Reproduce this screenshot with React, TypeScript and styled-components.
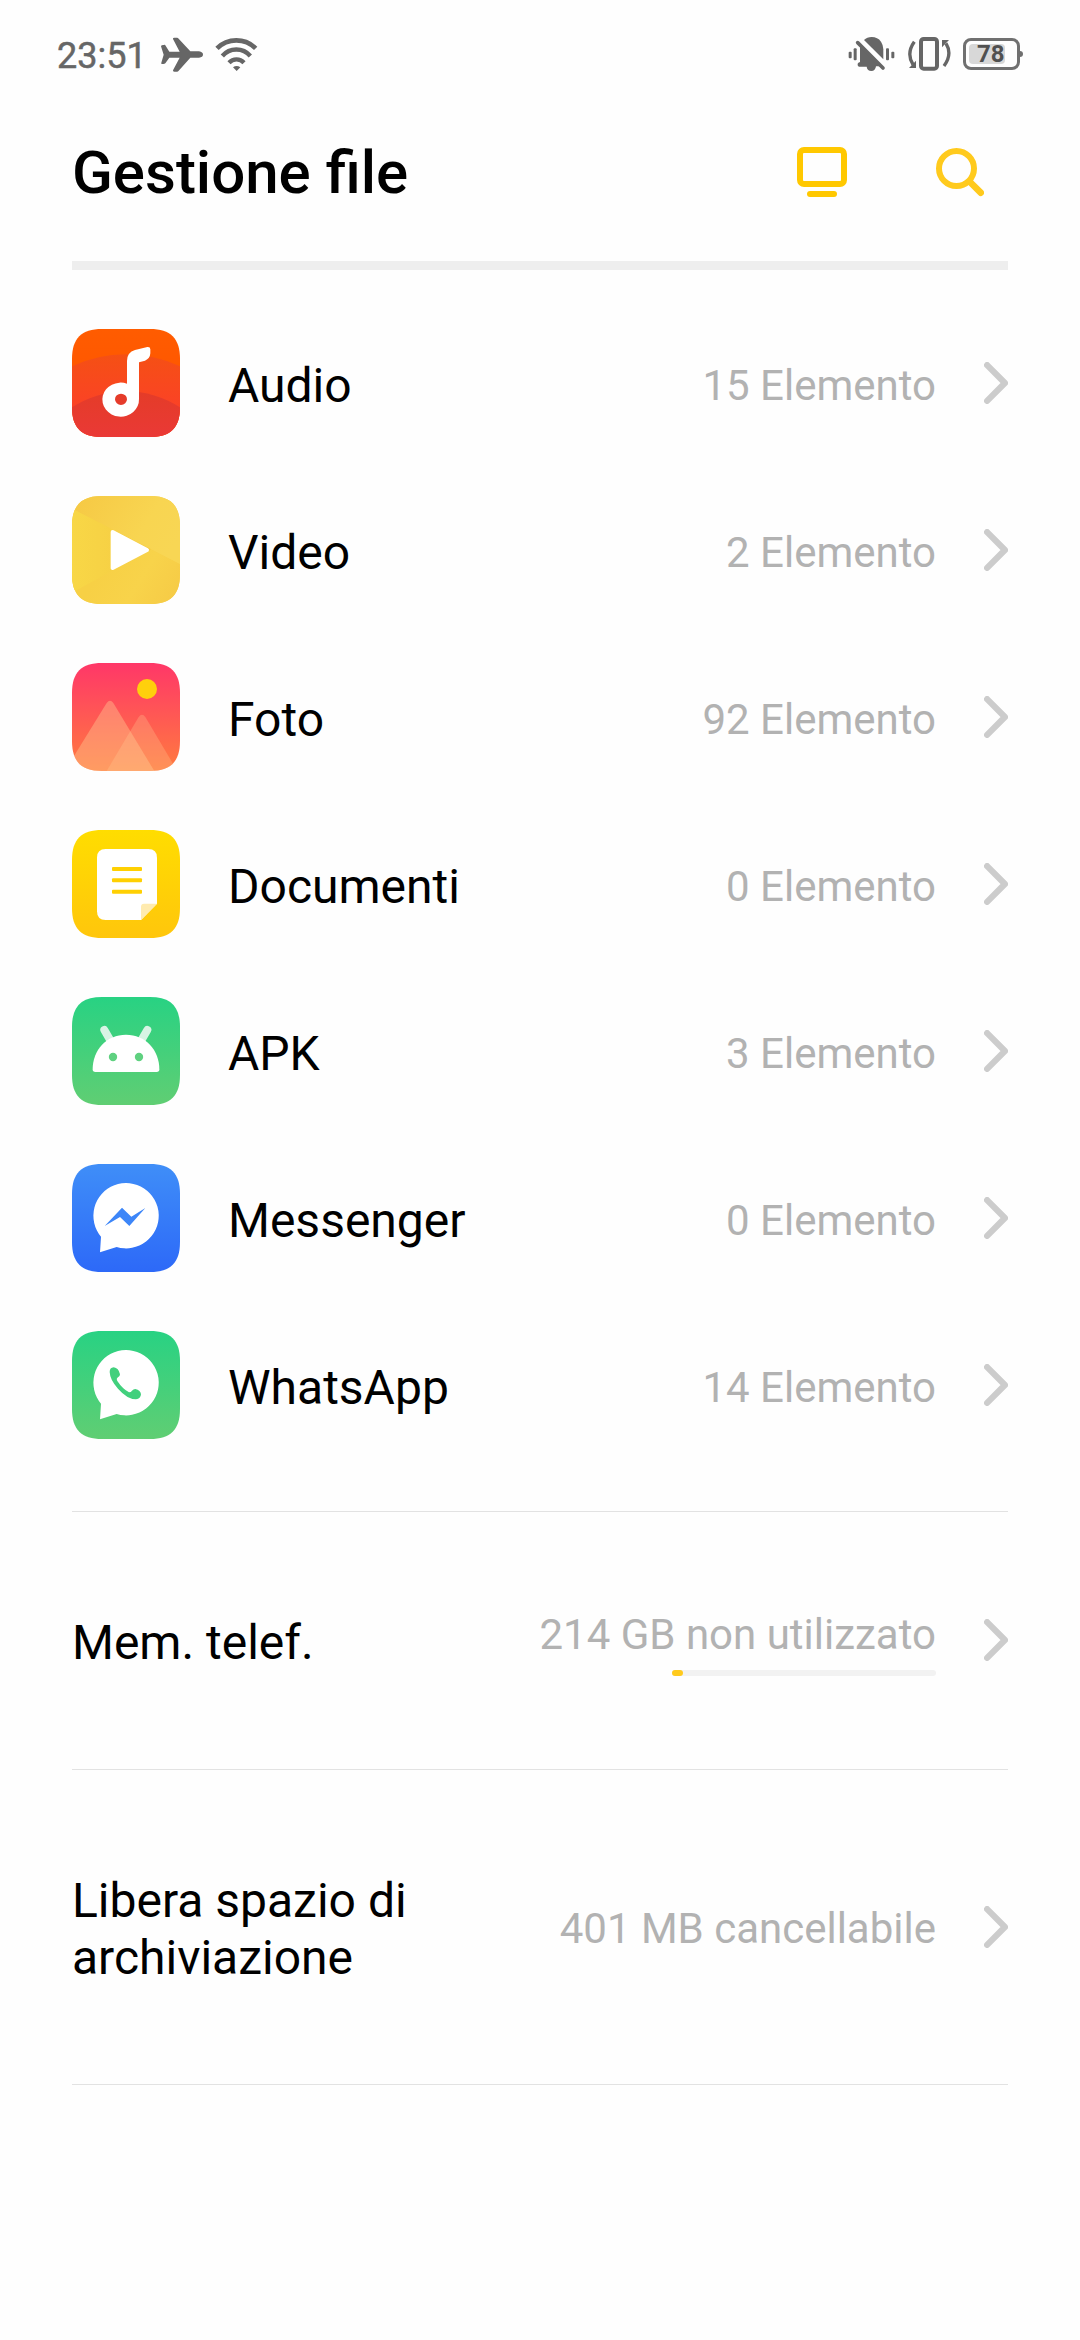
import React from 'react';
import styled, { createGlobalStyle } from 'styled-components';

const GlobalStyle = createGlobalStyle`
  * { box-sizing: border-box; }
  body {
    margin: 0;
    background: #fefefe;
    font-family: Roboto, 'Noto Sans', sans-serif;
    color: #000;
  }
  svg { display: block; flex: none; }
`;

const Screen = styled.main`
  width: 1080px;
  height: 2340px;
  display: flex;
  flex-direction: column;
  background: #fefefe;
`;

const StatusBar = styled.div`
  height: 108px;
  padding: 0 57px 0 57px;
  display: flex;
  align-items: center;
  justify-content: space-between;
  color: #666;
`;

const StatusGroup = styled.div<{ $gap: number }>`
  display: flex;
  align-items: center;
  gap: ${(p) => p.$gap}px;
`;

const Clock = styled.span`
  width: 92px;
  padding-top: 3px;
  font-size: 36px;
  line-height: 42px;
  white-space: nowrap;
  -webkit-text-stroke: 0.5px #666;
`;

const Battery = styled.div`
  display: flex;
  align-items: center;
`;

const BatteryCase = styled.div`
  width: 57px;
  height: 32px;
  padding: 3px;
  border: 3px solid #707070;
  border-radius: 8px;
`;

const BatteryLevel = styled.div`
  width: 36px;
  height: 20px;
  border-radius: 4px;
  background: #d8d8d8;
  color: #505050;
  font-size: 24px;
  font-weight: 700;
  line-height: 21px;
  padding-left: 8px;
  white-space: nowrap;
`;

const BatteryTip = styled.div`
  width: 3px;
  height: 6px;
  border-radius: 0 3px 3px 0;
  background: #707070;
`;

const Header = styled.header`
  height: 153px;
  padding: 0 96px 0 72px;
  display: flex;
  align-items: flex-start;
  justify-content: space-between;
`;

const Title = styled.h1`
  margin: 29px 0 0;
  font-size: 60px;
  font-weight: 500;
  line-height: 71px;
`;

const HeaderActions = styled.div`
  display: flex;
  gap: 89px;
  padding-top: 39px;
`;

const ThickRule = styled.hr`
  width: 936px;
  height: 9px;
  margin: 0 72px;
  border: 0;
  background: #eee;
`;

const Rule = styled.hr`
  width: 936px;
  height: 1px;
  margin: 0 72px;
  border: 0;
  background: #e2e2e2;
`;

const CategoryList = styled.section`
  padding: 29px 72px 43px;
`;

const CategoryRow = styled.div`
  height: 167px;
  padding-top: 1px;
  display: flex;
  align-items: center;
  gap: 48px;
`;

const StorageRow = styled.section<{ $height: number; $bottom?: number }>`
  height: ${(p) => p.$height}px;
  padding: 0 72px ${(p) => p.$bottom ?? 0}px;
  display: flex;
  align-items: center;
  gap: 48px;
`;

const Label = styled.div<{ $width?: number; $drop?: number }>`
  flex: ${(p) => (p.$width ? 'none' : '1')};
  width: ${(p) => (p.$width ? `${p.$width}px` : 'auto')};
  padding-top: ${(p) => p.$drop ?? 5}px;
  font-size: 48px;
  line-height: 57px;
`;

const Value = styled.div<{ $drop?: number }>`
  margin-left: auto;
  padding-top: ${(p) => p.$drop ?? 5}px;
  font-size: 42px;
  line-height: 49px;
  color: #b2b2b2;
  white-space: nowrap;
`;

const Usage = styled.div`
  display: flex;
  flex-direction: column;
  align-items: flex-end;
  padding-top: 1px;
`;

const UsageTrack = styled.div`
  width: 264px;
  height: 6px;
  margin-top: 11px;
  border-radius: 3px;
  background: #f2f2f2;
`;

const UsageFill = styled.div`
  height: 6px;
  border-radius: 3px;
  background: #ffca1d;
`;

const Chevron = () => (
  <svg width="24" height="42" viewBox="0 0 24 42" fill="none">
    <path d="M3.1 3.1L20.9 21L3.1 38.9" stroke="#ccc" strokeWidth="6.2" strokeLinecap="round" strokeLinejoin="round" />
  </svg>
);

const Plane = () => (
  <svg width="42" height="35" viewBox="363 49 126 105" fill="#666">
    <path d="M365 74L375 72L388 93H419L399 55Q398 51 403 51H411Q414 51 416 54L451 92H477Q489 94 489 102Q489 109 477 111H451L416 150Q414 153 411 153H403Q398 153 399 149L419 111H388L376 128Q374 130 370 130H365Q363 129 364 126L371 102L363 77Z" />
  </svg>
);

const Wifi = () => (
  <svg width="43" height="35" viewBox="524 50 129 105" fill="none" stroke="#666">
    <path d="M530 84A82 82 0 0 1 646 84" strokeWidth="14" />
    <path d="M546 107A55 55 0 0 1 630 107" strokeWidth="13" />
    <path d="M566 127A31 31 0 0 1 611 127" strokeWidth="13" />
    <path d="M578 141Q589 133 600 141L589 152Z" fill="#666" stroke="none" />
  </svg>
);

const BellMuted = () => (
  <svg width="47" height="36" viewBox="55 48 141 108" fill="#666">
    <rect x="57" y="95" width="9" height="20" rx="3" />
    <rect x="72" y="85" width="9" height="36" rx="3" />
    <rect x="169" y="85" width="9" height="36" rx="3" />
    <rect x="185" y="95" width="9" height="20" rx="3" />
    <path d="M103 60Q112 51 126 51Q144 51 154 65Q161 75 161 88V118Z" />
    <path d="M91 76L152 139H139Q137 153 125 153Q113 153 111 140H88Q84 139 84 135V131Q85 128 91 126Z" />
    <path d="M84 68L160 144" stroke="#666" strokeWidth="11" strokeLinecap="round" />
  </svg>
);

const PhoneVibrate = () => (
  <svg width="44" height="36" viewBox="231 48 132 108" fill="none" stroke="#666">
    <rect x="273" y="57" width="48" height="89" rx="8" strokeWidth="12" />
    <path d="M253 65Q228 100 249 134" strokeWidth="10" />
    <path d="M258 122V144H237Z" fill="#666" stroke="none" />
    <path d="M342 138Q368 103 348 70" strokeWidth="10" />
    <path d="M336 82V60H357Z" fill="#666" stroke="none" />
  </svg>
);

const MonitorIcon = () => (
  <svg width="50" height="50" viewBox="0 0 50 50" fill="none">
    <rect x="3" y="3" width="44" height="34" rx="4" stroke="#ffc800" strokeWidth="6" />
    <rect x="10" y="44" width="30" height="6" rx="3" fill="#ffc800" />
  </svg>
);

const SearchIcon = () => (
  <svg width="48" height="50" viewBox="0 0 48 50" fill="none" stroke="#ffca1d" strokeLinecap="round">
    <circle cx="20.5" cy="21.5" r="17.5" strokeWidth="6" />
    <path d="M34 35L44.7 45.7" strokeWidth="6.6" />
  </svg>
);

const TILE = 'M0 90C0 28 28 0 90 0H234C296 0 324 28 324 90V234C324 296 296 324 234 324H90C28 324 0 296 0 234Z';

type TileProps = { id: string; from: string; to: string; children: React.ReactNode };

const Tile = ({ id, from, to, children }: TileProps) => (
  <svg width="108" height="108" viewBox="0 0 324 324">
    <defs>
      <linearGradient id={`${id}-bg`} x1="0" y1="0" x2="0" y2="1">
        <stop offset="0" stopColor={from} />
        <stop offset="1" stopColor={to} />
      </linearGradient>
      <clipPath id={`${id}-clip`}>
        <path d={TILE} />
      </clipPath>
    </defs>
    <path d={TILE} fill={`url(#${id}-bg)`} />
    <g clipPath={`url(#${id}-clip)`}>{children}</g>
  </svg>
);

const AudioIcon = () => (
  <Tile id="audio" from="#ff5c00" to="#ff5000">
    <defs>
      <linearGradient id="audio-mid" x1="0" y1="75" x2="0" y2="235" gradientUnits="userSpaceOnUse">
        <stop offset="0" stopColor="#f55014" />
        <stop offset="1" stopColor="#fb4226" />
      </linearGradient>
      <linearGradient id="audio-low" x1="0" y1="185" x2="0" y2="324" gradientUnits="userSpaceOnUse">
        <stop offset="0" stopColor="#e43c28" />
        <stop offset="1" stopColor="#ea3936" />
      </linearGradient>
    </defs>
    <path d="M0 112A382 382 0 0 1 324 112V324H0Z" fill="url(#audio-mid)" />
    <path d="M0 235A297 297 0 0 1 324 235V324H0Z" fill="url(#audio-low)" />
    <path
      fill="#fff"
      fillRule="evenodd"
      d="M165 164V96Q165 70 189 63L226 54Q235 53 235 61V73Q234 89 219 95L201 100V210A55 51 0 1 1 165 164ZM147 194A18 17 0 1 0 147 228A18 17 0 1 0 147 194Z"
    />
  </Tile>
);

const VideoIcon = () => (
  <Tile id="video" from="#f7ce48" to="#f7ce48">
    <defs>
      <linearGradient id="video-top" x1="40" y1="0" x2="300" y2="160" gradientUnits="userSpaceOnUse">
        <stop offset="0" stopColor="#f6ca45" />
        <stop offset="0.65" stopColor="#f8d551" />
        <stop offset="1" stopColor="#f8d654" />
      </linearGradient>
      <linearGradient id="video-left" x1="0" y1="0" x2="230" y2="0" gradientUnits="userSpaceOnUse">
        <stop offset="0" stopColor="#f8d746" />
        <stop offset="1" stopColor="#f5cb43" />
      </linearGradient>
      <linearGradient id="video-low" x1="100" y1="200" x2="300" y2="324" gradientUnits="userSpaceOnUse">
        <stop offset="0" stopColor="#f7d045" />
        <stop offset="0.5" stopColor="#f8d34a" />
        <stop offset="1" stopColor="#f6cb46" />
      </linearGradient>
    </defs>
    <path d="M0 0H324V205L0 38Z" fill="url(#video-top)" />
    <path d="M0 38L324 205V324H0Z" fill="url(#video-low)" />
    <path d="M0 38L238 160L0 290Z" fill="url(#video-left)" />
    <path d="M122 108L225 162L122 216Z" fill="#fff" stroke="#fff" strokeWidth="12" strokeLinejoin="round" />
  </Tile>
);

const PhotoIcon = () => (
  <Tile id="photo" from="#ff3768" to="#ff7b3f">
    <circle cx="225" cy="78" r="30" fill="#ffd00c" />
    <path d="M104 324L200 162Q210 148 220 162L316 324Z" fill="#ffcc96" fillOpacity="0.28" />
    <path d="M-22 324L104 120Q114 107 124 120L247 324Z" fill="#ffcc96" fillOpacity="0.4" />
  </Tile>
);

const DocumentIcon = () => (
  <Tile id="doc" from="#ffdd00" to="#ffc60c">
    <path d="M101 57H229Q255 57 255 83V221L207 270H101Q75 270 75 244V83Q75 57 101 57Z" fill="#fff" />
    <path d="M207 270V230Q207 221 216 221H255Z" fill="#ffebaf" />
    <g fill="#ffd002">
      <rect x="120" y="111" width="90" height="12" rx="3" />
      <rect x="120" y="145" width="90" height="12" rx="3" />
      <rect x="120" y="179" width="90" height="12" rx="3" />
    </g>
  </Tile>
);

const ApkIcon = () => (
  <Tile id="apk" from="#28d283" to="#60ce73">
    <path d="M97 99L114 128M226 99L209 128" stroke="#d8f4e4" strokeWidth="24" strokeLinecap="round" />
    <path d="M62 217C62 158 104 113 162 113C220 113 262 158 262 217Q262 225 254 225H70Q62 225 62 217Z" fill="#fff" />
    <circle cx="123" cy="180" r="12.5" fill="#5fd180" />
    <circle cx="201" cy="180" r="12.5" fill="#5fd180" />
  </Tile>
);

const Bubble = () => (
  <path d="M87 218A98 98 0 1 1 134 249L84 265Z" fill="#fff" />
);

const MessengerIcon = () => (
  <Tile id="messenger" from="#3f8ef8" to="#2d69f8">
    <Bubble />
    <path d="M98 186L150 131L178 158L220 132L172 186L144 159Z" fill="#3d86f8" />
  </Tile>
);

const WhatsAppIcon = () => (
  <Tile id="whatsapp" from="#28d283" to="#60ce73">
    <Bubble />
    <path
      d="M113 123Q113 110 125 109Q140 111 144 130Q144 136 138 139Q132 143 136 150Q151 173 171 184Q177 184 180 179Q184 174 190 174Q206 178 207 190Q206 204 192 205Q165 204 138 173Q114 147 113 123Z"
      fill="#42d07d"
    />
  </Tile>
);

const categories = [
  { label: 'Audio', count: 15, Icon: AudioIcon },
  { label: 'Video', count: 2, Icon: VideoIcon },
  { label: 'Foto', count: 92, Icon: PhotoIcon },
  { label: 'Documenti', count: 0, Icon: DocumentIcon },
  { label: 'APK', count: 3, Icon: ApkIcon },
  { label: 'Messenger', count: 0, Icon: MessengerIcon },
  { label: 'WhatsApp', count: 14, Icon: WhatsAppIcon },
];

const usedPercent = 4.2;

export default function App() {
  return (
    <Screen>
      <GlobalStyle />
      <StatusBar>
        <StatusGroup $gap={12}>
          <Clock>23:51</Clock>
          <Plane />
          <Wifi />
        </StatusGroup>
        <StatusGroup $gap={12}>
          <BellMuted />
          <PhoneVibrate />
          <Battery>
            <BatteryCase>
              <BatteryLevel>78</BatteryLevel>
            </BatteryCase>
            <BatteryTip />
          </Battery>
        </StatusGroup>
      </StatusBar>
      <Header>
        <Title>Gestione file</Title>
        <HeaderActions>
          <MonitorIcon />
          <SearchIcon />
        </HeaderActions>
      </Header>
      <ThickRule />
      <CategoryList>
        {categories.map(({ label, count, Icon }) => (
          <CategoryRow key={label}>
            <Icon />
            <Label>{label}</Label>
            <Value>{count} Elemento</Value>
            <Chevron />
          </CategoryRow>
        ))}
      </CategoryList>
      <Rule />
      <StorageRow $height={257} $bottom={1}>
        <Label>Mem. telef.</Label>
        <Usage>
          <Value>214 GB non utilizzato</Value>
          <UsageTrack>
            <UsageFill style={{ width: `${usedPercent}%` }} />
          </UsageTrack>
        </Usage>
        <Chevron />
      </StorageRow>
      <Rule />
      <StorageRow $height={314}>
        <Label $width={400} $drop={4}>Libera spazio di archiviazione</Label>
        <Value $drop={3}>401 MB cancellabile</Value>
        <Chevron />
      </StorageRow>
      <Rule />
    </Screen>
  );
}
